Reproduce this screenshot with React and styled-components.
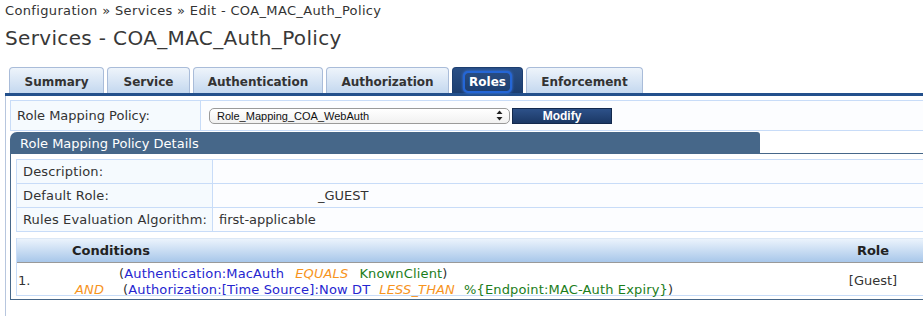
import React from 'react'
import styled, { createGlobalStyle } from 'styled-components'

const GlobalStyle = createGlobalStyle`
  body {
    margin: 0;
    background: #fff;
    font-family: "DejaVu Sans", Verdana, sans-serif;
    color: #333;
  }
`

const Page = styled.div`
  padding-top: 2px;
`

const Breadcrumb = styled.div`
  padding-left: 5px;
  font-size: 13px;
  line-height: 18px;
  letter-spacing: 0.35px;
`

const Title = styled.h1`
  margin: 4px 0 0;
  padding-left: 5px;
  font-size: 20px;
  font-weight: normal;
  line-height: 28px;
  letter-spacing: 0.35px;
  color: #383838;
`

const TabBar = styled.div`
  display: flex;
  gap: 3px;
  margin: 15px 0 0 5px;
  padding-left: 4px;
  border-bottom: 3px solid #23508c;
`

const Tab = styled.div`
  box-sizing: border-box;
  width: ${p => p.$w}px;
  height: 26px;
  padding-top: 3px;
  display: flex;
  align-items: center;
  justify-content: center;
  font-size: 12px;
  font-weight: bold;
  border: 1px solid ${p => (p.$active ? '#1c3e70' : '#a9bcd9')};
  border-bottom: none;
  border-radius: 4px 4px 0 0;
  color: ${p => (p.$active ? '#fff' : '#333')};
  background: ${p =>
    p.$active ? 'linear-gradient(#2a4f85, #1c3e70)' : 'linear-gradient(#eef4fb, #c4d8ef)'};
`

const FocusLabel = styled.span`
  padding: 2px 4px;
  border-radius: 3px;
  box-shadow: 0 0 0 2px #2466d6, 0 0 3px 2px #3b7cf0;
`

const Content = styled.div`
  margin-left: 5px;
  border-left: 1px solid #b7c6de;
  padding: 4px 0 16px 4px;
`

const PolicyRow = styled.div`
  box-sizing: border-box;
  display: flex;
  height: 31px;
  border: 1px solid #c8dcf8;
  border-right: none;
`

const PolicyLabel = styled.div`
  width: 183px;
  padding-left: 6px;
  display: flex;
  align-items: center;
  font-size: 13px;
  background: #f5fafe;
  border-right: 1px solid #c8dcf8;
`

const PolicyValue = styled.div`
  flex: 1;
  display: flex;
  align-items: center;
  gap: 2px;
  padding-left: 8px;
  background: #fcfdff;
`

const Select = styled.div`
  box-sizing: border-box;
  width: 301px;
  height: 16px;
  display: flex;
  align-items: center;
  justify-content: space-between;
  padding: 0 6px 0 7px;
  border: 1px solid #9a9a9a;
  border-radius: 5px;
  background: linear-gradient(#ffffff, #f1f1f1);
  font-family: "Liberation Sans", Arial, sans-serif;
  font-size: 11px;
  color: #111;
`

const ModifyButton = styled.button`
  box-sizing: border-box;
  width: 100px;
  height: 16px;
  padding: 0;
  border: 1px solid #13294d;
  background: linear-gradient(#2d5189, #1b3865);
  color: #fff;
  font-family: "Liberation Sans", Arial, sans-serif;
  font-size: 12px;
  font-weight: bold;
  line-height: 14px;
`

const PanelHead = styled.div`
  display: flex;
  margin-top: 1px;
`

const HeadTab = styled.div`
  width: 740px;
  height: 22px;
  padding-left: 10px;
  line-height: 23px;
  font-size: 13px;
  color: #fff;
  background: #466789;
  border-radius: 7px 3px 0 0;
`

const HeadFill = styled.div`
  flex: 1;
  border-bottom: 1px solid #466789;
`

const PanelBody = styled.div`
  border-left: 1px solid #466789;
  border-bottom: 1px solid #466789;
  padding: 5px 0 3px 5px;
`

const DetailTable = styled.div`
  border-left: 1px solid #c8dcf8;
  border-bottom: 1px solid #c8dcf8;
`

const DetailRow = styled.div`
  display: grid;
  grid-template-columns: 196px 1fr;
  height: 24px;
  box-sizing: border-box;
  border-top: 1px solid #c8dcf8;
  font-size: 13px;
  line-height: 23px;
`

const DetailLabel = styled.div`
  padding-left: 6px;
  background: #f5fafe;
  border-right: 1px solid #c8dcf8;
  letter-spacing: 0.15px;
`

const DetailValue = styled.div`
  padding-left: ${p => p.$indent || 6}px;
  background: #fcfdff;
`

const CondTable = styled.div`
  margin-top: 6px;
  border-left: 1px solid #c8dcf8;
  border-bottom: 1px solid #c8dcf8;
`

const CondHead = styled.div`
  display: grid;
  grid-template-columns: 55px 1fr 100px;
  height: 25px;
  box-sizing: border-box;
  border-top: 1px solid #dce8f6;
  border-bottom: 1px solid #999;
  background: linear-gradient(#ebf3fc, #a8c7ea);
  font-size: 13px;
  font-weight: bold;
  line-height: 24px;
  color: #222;
`

const HeadCell = styled.div`
  text-align: ${p => p.$align || 'left'};
`

const CondRow = styled.div`
  display: grid;
  grid-template-columns: 55px 1fr 100px;
  height: 32px;
  align-items: center;
  font-size: 13px;
  background: #fff;
`

const NumCell = styled.div`
  padding-left: 1px;
`

const Lines = styled.div`
  margin-top: 3px;
  letter-spacing: 0.15px;
`

const RoleCell = styled.div`
  text-align: center;
  color: #333;
`

const Line = styled.div`
  display: flex;
  line-height: 16px;
  white-space: pre;
`

const OpSlot = styled.span`
  width: ${p => 47 + (p.$extra || 0)}px;
  padding-left: 3px;
  box-sizing: border-box;
  color: #f7941d;
  font-style: italic;
`

const Attr = styled.span`
  color: #2626d0;
`

const Op = styled.span`
  margin: 0 ${p => p.$gap || 10}px;
  color: #f7941d;
  font-style: italic;
`

const Val = styled.span`
  color: #1b7d1b;
`

const tabs = [
  { label: 'Summary', w: 95 },
  { label: 'Service', w: 83 },
  { label: 'Authentication', w: 130 },
  { label: 'Authorization', w: 123 },
  { label: 'Roles', w: 71, active: true },
  { label: 'Enforcement', w: 117 },
]

function UpDown() {
  return (
    <svg width="7" height="11" viewBox="0 0 7 11">
      <path d="M3.5 0.5 L6.5 4 H0.5 Z" fill="#222" />
      <path d="M3.5 10.5 L6.5 7 H0.5 Z" fill="#222" />
    </svg>
  )
}

export default function App() {
  return (
    <Page>
      <GlobalStyle />
      <Breadcrumb>Configuration » Services » Edit - COA_MAC_Auth_Policy</Breadcrumb>
      <Title>Services - COA_MAC_Auth_Policy</Title>

      <TabBar>
        {tabs.map(t => (
          <Tab key={t.label} $w={t.w} $active={t.active}>
            {t.active ? <FocusLabel>{t.label}</FocusLabel> : t.label}
          </Tab>
        ))}
      </TabBar>

      <Content>
        <PolicyRow>
          <PolicyLabel>Role Mapping Policy:</PolicyLabel>
          <PolicyValue>
            <Select>
              <span>Role_Mapping_COA_WebAuth</span>
              <UpDown />
            </Select>
            <ModifyButton>Modify</ModifyButton>
          </PolicyValue>
        </PolicyRow>

        <PanelHead>
          <HeadTab>Role Mapping Policy Details</HeadTab>
          <HeadFill />
        </PanelHead>
        <PanelBody>
          <DetailTable>
            <DetailRow>
              <DetailLabel>Description:</DetailLabel>
              <DetailValue />
            </DetailRow>
            <DetailRow>
              <DetailLabel>Default Role:</DetailLabel>
              <DetailValue $indent={105}>_GUEST</DetailValue>
            </DetailRow>
            <DetailRow>
              <DetailLabel>Rules Evaluation Algorithm:</DetailLabel>
              <DetailValue>first-applicable</DetailValue>
            </DetailRow>
          </DetailTable>

          <CondTable>
            <CondHead>
              <HeadCell />
              <HeadCell>Conditions</HeadCell>
              <HeadCell $align="center">Role</HeadCell>
            </CondHead>
            <CondRow>
              <NumCell>1.</NumCell>
              <Lines>
                <Line>
                  <OpSlot />
                  <span>(</span>
                  <Attr>Authentication:MacAuth</Attr>
                  <Op $gap={11}>EQUALS</Op>
                  <Val>KnownClient</Val>
                  <span>)</span>
                </Line>
                <Line>
                  <OpSlot $extra={4}>AND</OpSlot>
                  <span>(</span>
                  <Attr>Authorization:[Time Source]:Now DT</Attr>
                  <Op $gap={9}>LESS_THAN</Op>
                  <Val>%{'{'}Endpoint:MAC-Auth Expiry{'}'}</Val>
                  <span>)</span>
                </Line>
              </Lines>
              <RoleCell>[Guest]</RoleCell>
            </CondRow>
          </CondTable>
        </PanelBody>
      </Content>
    </Page>
  )
}
